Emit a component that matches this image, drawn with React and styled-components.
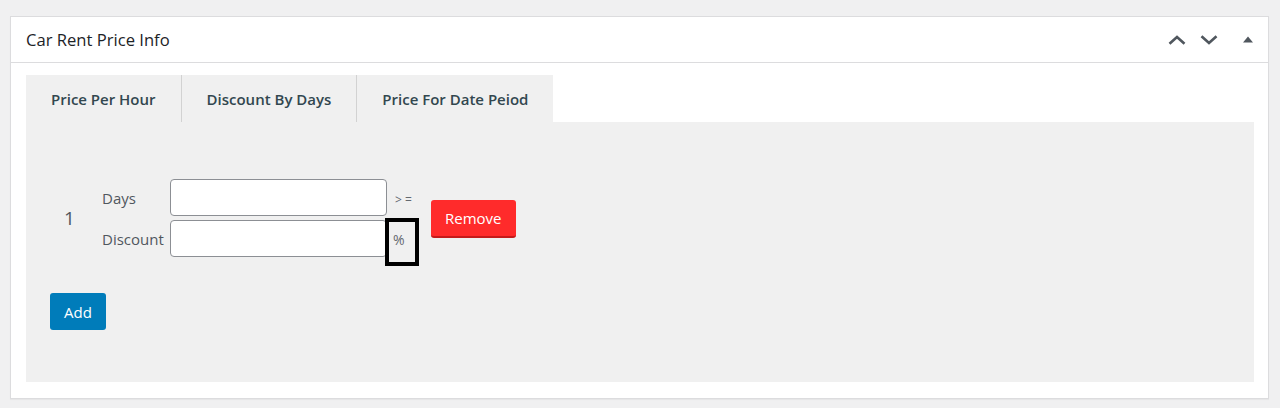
import React from "react";
import styled, { createGlobalStyle } from "styled-components";

const Global = createGlobalStyle`
  html, body { margin: 0; padding: 0; background: #f0f0f1; }
  body { font-family: "Open Sans", "Noto Sans", sans-serif; color: #3c434a; }
  *, *::before, *::after { box-sizing: border-box; }
`;

const Page = styled.div`
  padding: 16px 11px 0 10px;
  height: 408px;
`;

const Panel = styled.section`
  background: #fff;
  border: 1px solid #dcdcde;
  box-shadow: 0 1px 1px rgba(0,0,0,0.04);
`;

const Header = styled.header`
  height: 46px;
  border-bottom: 1px solid #dcdcde;
  display: flex;
  align-items: center;
  padding: 0 14px 0 15px;
`;

const Title = styled.h2`
  margin: 0;
  flex: 1;
  font-size: 16.6px;
  font-weight: 400;
  color: #1d2327;
  padding-bottom: 1px;
`;

const Handles = styled.div`
  display: flex;
  align-items: center;
  gap: 14px;
  color: #50575e;
`;

const HandleBtn = styled.span`
  display: flex;
  align-items: center;
  justify-content: center;
  width: ${p => p.$w || 18}px;
  margin-left: ${p => p.$ml || 0}px;
`;

const Body = styled.div`
  padding: 12px 14px 16px 15px;
`;

const Tabs = styled.div`
  display: flex;
`;

const Tab = styled.div`
  height: 47px;
  display: flex;
  align-items: center;
  padding: 1px 25px 0;
  background: #f0f0f0;
  font-size: 15px;
  font-weight: 600;
  color: #32474f;
  & + & {
    border-left: 1px solid #d2d2d2;
  }
`;

const Content = styled.div`
  background: #f0f0f0;
  height: 260px;
  padding: 57px 24px 0;
`;

const Row = styled.div`
  display: flex;
  align-items: center;
`;

const Num = styled.div`
  width: 52px;
  padding-left: 14px;
  font-size: 19px;
  color: #50575e;
`;

const Fields = styled.div`
  display: grid;
  grid-template-columns: 68px 217px 44px;
  grid-auto-rows: 37px;
  row-gap: 4px;
  align-items: center;
`;

const Label = styled.label`
  font-size: 15px;
  color: #50575e;
`;

const Input = styled.input`
  width: 217px;
  height: 37px;
  border: 1px solid #8c8f94;
  border-radius: 4px;
  background: #fff;
  font-family: inherit;
  font-size: 14px;
  padding: 0 8px;
`;

const Suffix = styled.span`
  font-size: ${p => p.$size || 12}px;
  color: #646970;
  padding-left: ${p => p.$pl || 8}px;
  padding-top: ${p => p.$pt || 0}px;
  white-space: pre;
`;

const Marked = styled.span`
  position: relative;
  &::after {
    content: "";
    position: absolute;
    left: -8px;
    top: -12px;
    width: 34px;
    height: 48px;
    border: 4px solid #000;
  }
`;

const Button = styled.button`
  font-family: inherit;
  font-size: 15px;
  color: #fff;
  border: none;
  cursor: pointer;
  height: ${p => p.$h}px;
  padding: 0 ${p => p.$px}px;
  border-radius: 3px;
  background: ${p => p.$bg};
  border-bottom: ${p => p.$bb || "none"};
  margin-top: ${p => p.$mt || 0}px;
`;

const AddWrap = styled.div`
  margin-top: 36px;
`;

export default function App() {
  return (
    <>
      <Global />
      <Page>
        <Panel>
          <Header>
            <Title>Car Rent Price Info</Title>
            <Handles>
              <HandleBtn>
                <svg width="18" height="10" viewBox="0 0 18 10" fill="none" stroke="currentColor" strokeWidth="2.6">
                  <path d="M1.5 8.8 L9 2 L16.5 8.8" />
                </svg>
              </HandleBtn>
              <HandleBtn>
                <svg width="18" height="10" viewBox="0 0 18 10" fill="none" stroke="currentColor" strokeWidth="2.6">
                  <path d="M1.5 1.2 L9 8 L16.5 1.2" />
                </svg>
              </HandleBtn>
              <HandleBtn $w={12} $ml={10}>
                <svg width="10" height="7" viewBox="0 0 10 7" fill="currentColor">
                  <path d="M0 6.5 L5 0.5 L10 6.5 Z" />
                </svg>
              </HandleBtn>
            </Handles>
          </Header>
          <Body>
            <Tabs>
              <Tab>Price Per Hour</Tab>
              <Tab>Discount By Days</Tab>
              <Tab>Price For Date Peiod</Tab>
            </Tabs>
            <Content>
              <Row>
                <Num>1</Num>
                <Fields>
                  <Label>Days</Label>
                  <Input type="text" />
                  <Suffix $pt={4}>{"> ="}</Suffix>
                  <Label>Discount</Label>
                  <Input type="text" />
                  <Suffix $size={14} $pl={6} $pt={2}>
                    <Marked>%</Marked>
                  </Suffix>
                </Fields>
                <Button $bg="#ff2b2b" $h={38} $px={14} $mt={1} $bb="2px solid #c51a1a">
                  Remove
                </Button>
              </Row>
              <AddWrap>
                <Button $bg="#007cba" $h={37} $px={14}>
                  Add
                </Button>
              </AddWrap>
            </Content>
          </Body>
        </Panel>
      </Page>
    </>
  );
}
